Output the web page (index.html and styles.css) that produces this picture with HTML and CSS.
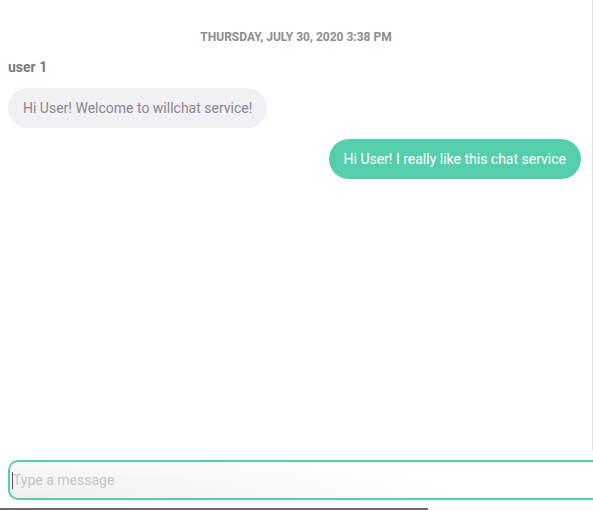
FILE: index.html
```html
<!DOCTYPE html>
<html>
<head>
<meta charset="utf-8">
<link rel="stylesheet" href="styles.css">
</head>
<body>
<div class="page">
  <div class="chat">
    <div class="date">Thursday, July 30, 2020 3:38 PM</div>
    <div class="sender">user 1</div>
    <div class="row left"><div class="bubble incoming">Hi User! Welcome to willchat service!</div></div>
    <div class="row right"><div class="bubble outgoing">Hi User! I really like this chat service</div></div>
  </div>
  <div class="composer">
    <div class="input"><span class="caret"></span><span class="placeholder">Type a message</span></div>
  </div>
  <div class="bottom-line"></div>
</div>
</body>
</html>
```

FILE: styles.css
```css
html, body {
  margin: 0;
  padding: 0;
  background: #ffffff;
  font-family: Roboto, "Liberation Sans", sans-serif;
  overflow: hidden;
}
.page {
  width: 593px;
  height: 510px;
  display: flex;
  flex-direction: column;
  position: relative;
}
.chat {
  height: 450px;
  box-sizing: border-box;
  border-right: 1px solid #e4e4e4;
  width: 593px;
  padding: 30px 8px 0 8px;
  display: flex;
  flex-direction: column;
}
.date {
  text-align: center;
  text-transform: uppercase;
  font-size: 12px;
  font-weight: 700;
  color: #8e8e8e;
  line-height: 14px;
}
.sender {
  margin-top: 15px;
  font-size: 14px;
  font-weight: 700;
  color: #7a7a7a;
  line-height: 16px;
}
.row {
  display: flex;
}
.row.left {
  margin-top: 13px;
  justify-content: flex-start;
}
.row.right {
  margin-top: 11px;
  justify-content: flex-end;
  padding-right: 3px;
}
.bubble {
  height: 40px;
  box-sizing: border-box;
  border-radius: 20px;
  padding: 0 15px;
  font-size: 14px;
  line-height: 40px;
  white-space: nowrap;
}
.incoming {
  background: #f0f0f5;
  color: #8a8a8e;
}
.outgoing {
  background: #55cfab;
  color: #ffffff;
}
.composer {
  padding: 10px 0 0 8px;
  display: flex;
}
.input {
  width: 600px;
  height: 40px;
  flex: none;
  box-sizing: border-box;
  border: 2px solid #55cfab;
  border-right: none;
  border-radius: 10px 0 0 10px;
  display: flex;
  align-items: center;
  padding-left: 2px;
  background: radial-gradient(ellipse 480px 60px at 0 100%, #efefef 0%, #fafafa 60%, #ffffff 100%);
}
.caret {
  width: 1px;
  height: 17px;
  background: #555;
}
.placeholder {
  font-size: 14px;
  color: #c6c6c6;
}
.bottom-line {
  position: absolute;
  left: 0;
  bottom: 0;
  width: 428px;
  height: 2px;
  background: #6a6a6a;
}
```
